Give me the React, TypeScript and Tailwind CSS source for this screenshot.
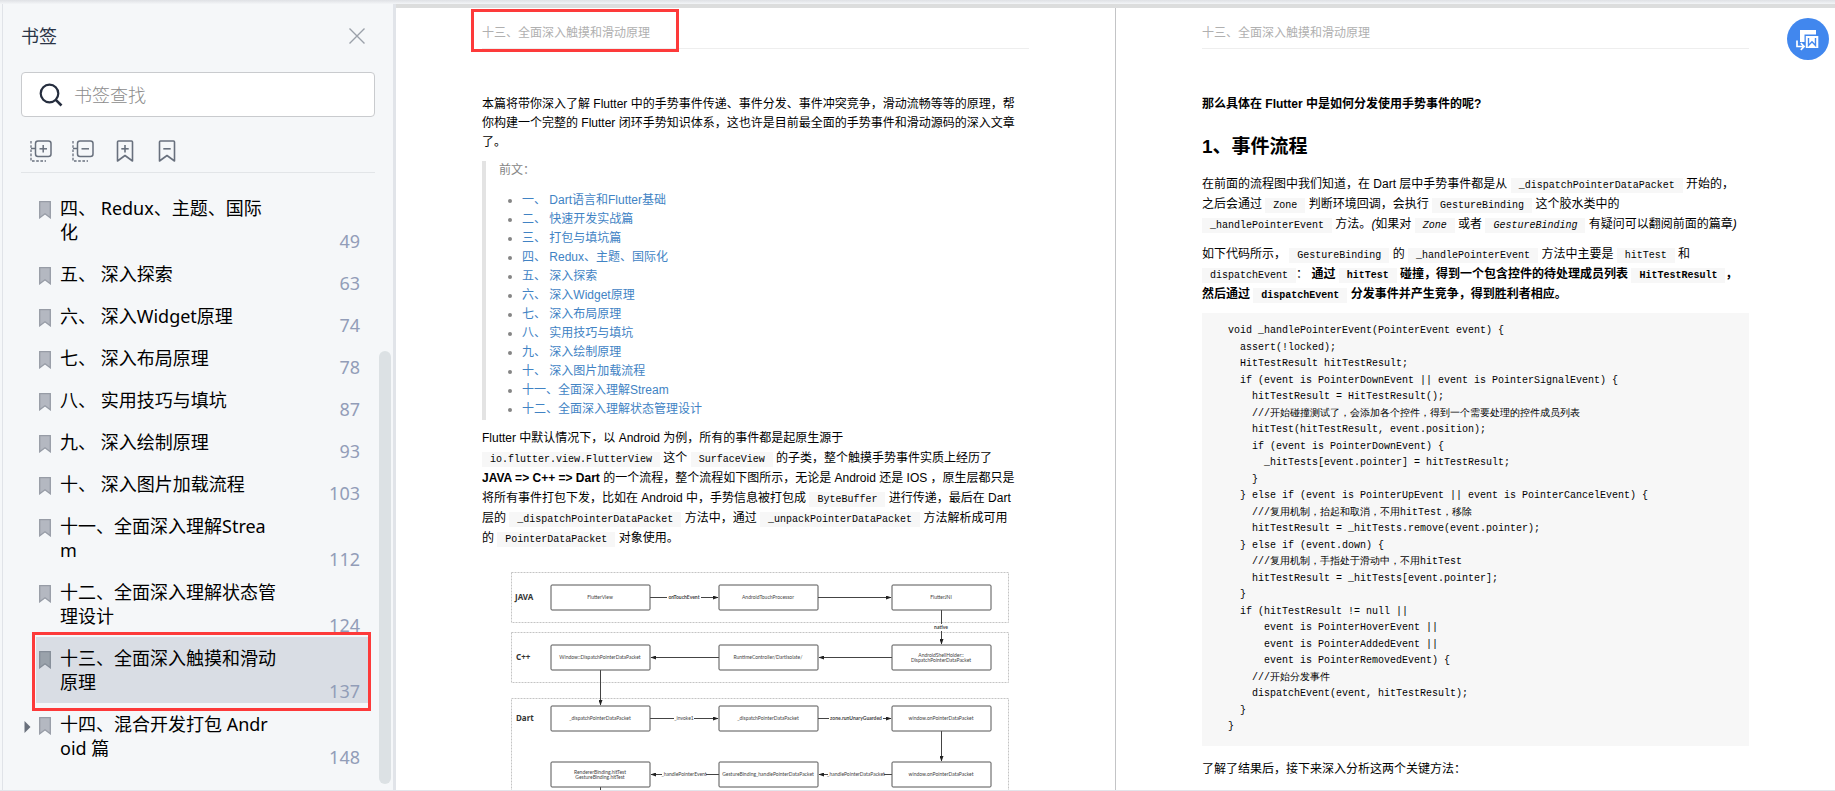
import type { ReactNode } from "react";

type Bookmark = { title: string; page: number; active?: boolean; expandable?: boolean };

const bookmarks: Bookmark[] = [
  { title: "四、 Redux、主题、国际化", page: 49 },
  { title: "五、 深入探索", page: 63 },
  { title: "六、 深入Widget原理", page: 74 },
  { title: "七、 深入布局原理", page: 78 },
  { title: "八、 实用技巧与填坑", page: 87 },
  { title: "九、 深入绘制原理", page: 93 },
  { title: "十、 深入图片加载流程", page: 103 },
  { title: "十一、全面深入理解Stream", page: 112 },
  { title: "十二、全面深入理解状态管理设计", page: 124 },
  { title: "十三、全面深入触摸和滑动原理", page: 137, active: true },
  { title: "十四、混合开发打包 Android 篇", page: 148, expandable: true },
];

const chapters = [
  "一、 Dart语言和Flutter基础",
  "二、 快速开发实战篇",
  "三、 打包与填坑篇",
  "四、 Redux、主题、国际化",
  "五、 深入探索",
  "六、 深入Widget原理",
  "七、 深入布局原理",
  "八、 实用技巧与填坑",
  "九、 深入绘制原理",
  "十、 深入图片加载流程",
  "十一、全面深入理解Stream",
  "十二、全面深入理解状态管理设计",
];

const source = `void _handlePointerEvent(PointerEvent event) {
  assert(!locked);
  HitTestResult hitTestResult;
  if (event is PointerDownEvent || event is PointerSignalEvent) {
    hitTestResult = HitTestResult();
    ///开始碰撞测试了，会添加各个控件，得到一个需要处理的控件成员列表
    hitTest(hitTestResult, event.position);
    if (event is PointerDownEvent) {
      _hitTests[event.pointer] = hitTestResult;
    }
  } else if (event is PointerUpEvent || event is PointerCancelEvent) {
    ///复用机制，抬起和取消，不用hitTest，移除
    hitTestResult = _hitTests.remove(event.pointer);
  } else if (event.down) {
    ///复用机制，手指处于滑动中，不用hitTest
    hitTestResult = _hitTests[event.pointer];
  }
  if (hitTestResult != null ||
      event is PointerHoverEvent ||
      event is PointerAddedEvent ||
      event is PointerRemovedEvent) {
    ///开始分发事件
    dispatchEvent(event, hitTestResult);
  }
}`;

function TreeIcon({ plus = false }: { plus?: boolean }) {
  return (
    <svg width="22" height="22" viewBox="0 0 22 22" fill="none" stroke="#68707d" strokeWidth="1.5">
      <path d="M1 1v20h15" strokeDasharray="2.6 1.6" strokeWidth="1.3" />
      <path d="M1 8.5h4" />
      <rect x="5.5" y="1" width="15.5" height="15.5" rx="2.5" />
      <path d="M9.5 8.8h7.5" />
      {plus && <path d="M13.2 5v7.5" />}
    </svg>
  );
}

function RibbonIcon({ plus = false }: { plus?: boolean }) {
  return (
    <svg width="18" height="22" viewBox="0 0 18 22" fill="none" stroke="#68707d" strokeWidth="1.6" strokeLinejoin="round">
      <path d="M1.5 2q0-1 1-1h13q1 0 1 1v19L9 15.5 1.5 21z" />
      <path d="M5.3 8.8h7.4" />
      {plus && <path d="M9 5v7.5" />}
    </svg>
  );
}

function BookmarkRow({ title, page, active, expandable }: Bookmark) {
  return (
    <li>
      <a href={`#page-${page}`} className={`relative flex items-start pr-2 pl-[3px] ${active ? "bg-[#d9dde4]" : ""}`}>
        {expandable && (
          <svg className="absolute top-[18px] -left-[12px]" width="7" height="12" viewBox="0 0 7 12">
            <path d="M0.5 0 6.5 6 0.5 12z" fill="#69707c" />
          </svg>
        )}
        <svg className="mt-[14px] shrink-0" width="12" height="18" viewBox="0 0 12 18">
          <path
            d="M0.7 0.7h10.6v16.1L6 12.8 0.7 16.8z"
            fill={active ? "#9aa2ab" : "#b4b8c1"}
            stroke={active ? "#858d98" : "#979ca6"}
            strokeWidth="1.3"
          />
        </svg>
        <span className="mt-[9px] mb-[9px] ml-[9px] w-[217px] shrink-0 font-[380] break-all text-black">{title}</span>
        <span className="ml-auto self-end font-[380] text-[#929db8]">{page}</span>
      </a>
    </li>
  );
}

function Sidebar() {
  return (
    <aside className="relative w-[391px] shrink-0 overflow-hidden border-l border-[#e0e3e8] bg-[#f5f7f9] px-[18px] font-['Noto_Sans','Noto_Sans_CJK_SC',sans-serif] text-lg leading-6">
      <div className="flex items-center justify-between pt-6 pr-[10px]">
        <h1 className="font-[380] text-[#2b3446]">书签</h1>
        <button aria-label="关闭">
          <svg width="16" height="16" viewBox="0 0 16 16" stroke="#9ba0a9" strokeWidth="1.4">
            <path d="M0.5 0.5l15 15M15.5 0.5l-15 15" />
          </svg>
        </button>
      </div>

      <label className="mt-6 flex h-[45px] items-center rounded-sm border border-[#c9cbce] bg-white pl-[17px]">
        <svg className="shrink-0" width="24" height="24" viewBox="0 0 24 24" fill="none" stroke="#252d3e" strokeWidth="2.2">
          <circle cx="10.5" cy="10.5" r="8.8" />
          <path d="M16.8 16.8l5.7 5.7" strokeWidth="2.6" />
        </svg>
        <input
          type="text"
          aria-label="书签查找"
          placeholder="书签查找"
          className="ml-[11px] min-w-0 flex-1 bg-transparent font-light outline-none placeholder:text-[#8c8c8c]"
        />
      </label>

      <div className="flex gap-5 border-b border-[#e2e5e8] pt-[23px] pb-[10px] pl-[9px]">
        <button aria-label="展开全部" className="flex w-[22px] justify-center"><TreeIcon plus /></button>
        <button aria-label="收起全部" className="flex w-[22px] justify-center"><TreeIcon /></button>
        <button aria-label="添加书签" className="flex w-[22px] justify-center"><RibbonIcon plus /></button>
        <button aria-label="删除书签" className="flex w-[22px] justify-center"><RibbonIcon /></button>
      </div>

      <div className="relative mt-[14px] mr-[7px] ml-[15px]">
        <ul>
          {bookmarks.map((b) => (
            <BookmarkRow key={b.page} {...b} />
          ))}
        </ul>
        {/* callout around the selected chapter */}
        <div className="pointer-events-none absolute -right-[3px] bottom-[58px] -left-1 h-[79px] border-3 border-[#fd3a3a]" />
      </div>

      <div className="absolute right-[2px] bottom-[6px] h-[433px] w-3 rounded-full bg-[#dce1e4]" />
    </aside>
  );
}

function Page({ children, marked = false }: { children: ReactNode; marked?: boolean }) {
  return (
    <article className="relative min-w-0 flex-1 overflow-hidden bg-white px-[86px] text-xs leading-[19px] text-black">
      <header className="border-b border-[#eeeeee] pt-4 pb-[6px] leading-[18px] text-[#b0b0b0]">十三、全面深入触摸和滑动原理</header>
      {marked && <div className="absolute top-px left-[75px] h-[43px] w-[208px] border-3 border-[#fd3a3a]" />}
      {children}
    </article>
  );
}

function Code({ children }: { children: ReactNode }) {
  return (
    <code className="bg-[#f7f7f7] px-2 py-[2px] font-['Liberation_Mono','Noto_Sans_CJK_SC',monospace] text-[10px] leading-none">{children}</code>
  );
}

const boxes = [
  { x: 69, y: 24, lines: ["FlutterView"] },
  { x: 237, y: 24, lines: ["AndroidTouchProcessor"] },
  { x: 410, y: 24, lines: ["FlutterJNI"] },
  { x: 69, y: 84, lines: ["Window::DispatchPointerDataPacket"] },
  { x: 237, y: 84, lines: ["RuntimeController/DartIsolate/"] },
  { x: 410, y: 84, lines: ["AndroidShellHolder::", "DispatchPointerDataPacket"] },
  { x: 69, y: 145, lines: ["_dispatchPointerDataPacket"] },
  { x: 237, y: 145, lines: ["_dispatchPointerDataPacket"] },
  { x: 410, y: 145, lines: ["window.onPointerDataPacket"] },
  { x: 69, y: 201, lines: ["RendererBinding.hitTest", "GestureBinding.hitTest"] },
  { x: 237, y: 201, lines: ["GestureBinding_handlePointerDataPacket"] },
  { x: 410, y: 201, lines: ["window.onPointerDataPacket"] },
];

const arrows = [
  "M168 36.5H236",
  "M336 36.5H409",
  "M459.5 49V83",
  "M410 96.5H337",
  "M237 96.5H169",
  "M118.5 109V144",
  "M168 157.5H236",
  "M336 157.5H409",
  "M459.5 170V200",
  "M410 213.5H337",
  "M237 213.5H169",
];

const edgeLabels = [
  { x: 202, y: 36, w: 34, text: "onTouchEvent", bold: true },
  { x: 459, y: 66, w: 16, text: "native", bold: true },
  { x: 202, y: 157, w: 20, text: "_invoke1" },
  { x: 374, y: 157, w: 54, text: "zone.runUnaryGuarded", bold: true },
  { x: 202, y: 213, w: 44, text: "_handlePointerEvent" },
  { x: 374, y: 213, w: 56, text: "_handlePointerDataPacket" },
];

function FlowChart() {
  return (
    <svg className="mt-[13px] w-full font-['Lato','Noto_Sans',sans-serif]" viewBox="0 0 547 240" fill="#444444">
      <defs>
        <marker id="head" markerUnits="userSpaceOnUse" markerWidth="6" markerHeight="4" refX="5" refY="2" orient="auto">
          <path d="M0 0 5.5 2 0 4z" fill="#222222" />
        </marker>
      </defs>
      <g fill="none" stroke="#c4c4c4" strokeDasharray="2 1">
        <rect x="29.5" y="11.5" width="497" height="50" />
        <rect x="29.5" y="71.5" width="497" height="50" />
        <rect x="29.5" y="137.5" width="497" height="160" />
      </g>
      <g className="font-['Noto_Sans',sans-serif]" fontSize="8" fontWeight="700" fill="#333333">
        <text x="33" y="39">JAVA</text>
        <text x="34" y="99">C++</text>
        <text x="34" y="160">Dart</text>
      </g>
      <g stroke="#444444">
        {arrows.map((d) => (
          <path key={d} d={d} markerEnd="url(#head)" />
        ))}
        <path d="M118.5 226V240" />
      </g>
      {edgeLabels.map((l) => (
        <g key={l.text} fontSize="5" textAnchor="middle" fontWeight={l.bold ? 700 : 400}>
          <rect x={l.x - l.w / 2} y={l.y - 3} width={l.w} height="7" fill="#ffffff" />
          <text x={l.x} y={l.y + 2}>{l.text}</text>
        </g>
      ))}
      {boxes.map((b) => (
        <g key={`${b.x}-${b.y}`} fontSize="5" textAnchor="middle">
          <rect x={b.x} y={b.y} width="99" height="25" rx="1" fill="#ffffff" stroke="#555555" />
          {b.lines.map((line, i) => (
            <text key={line} x={b.x + 49} y={b.y + 14 + (b.lines.length > 1 ? i * 5 - 2 : 0)}>{line}</text>
          ))}
        </g>
      ))}
    </svg>
  );
}

export default function App() {
  return (
    <div className="relative flex h-screen overflow-hidden border-b border-[#e2e4ea] bg-[#f5f7f9] pl-[2px] font-['Liberation_Sans','Noto_Sans_CJK_SC',sans-serif]">
      <Sidebar />
      <div className="w-[3px] shrink-0 bg-[#e1e4e9]" />

      <main className="flex min-w-0 flex-1 border-t-8 border-[#dcdddd]">
        <Page marked>
          <p className="mt-[46px]">
            本篇将带你深入了解 Flutter 中的手势事件传递、事件分发、事件冲突竞争，滑动流畅等等的原理，帮
            <br />
            你构建一个完整的 Flutter 闭环手势知识体系，这也许是目前最全面的手势事件和滑动源码的深入文章
            <br />
            了。
          </p>

          <blockquote className="mt-[9px] border-l-4 border-[#e3e3e3] pb-px text-[#858585]">
            <p className="pl-[13px]">前文：</p>
            <ul className="mt-[11px] list-disc pl-9">
              {chapters.map((c) => (
                <li key={c}>
                  <a href="#chapter" className="text-[#4183c4]">{c}</a>
                </li>
              ))}
            </ul>
          </blockquote>

          <p className="mt-2 leading-5">
            Flutter 中默认情况下，以 Android 为例，所有的事件都是起原生源于
            <br />
            <Code>io.flutter.view.FlutterView</Code> 这个 <Code>SurfaceView</Code> 的子类，整个触摸手势事件实质上经历了
            <br />
            <strong>{"JAVA => C++ => Dart"}</strong> 的一个流程，整个流程如下图所示，无论是 Android 还是 IOS ，原生层都只是
            <br />
            将所有事件打包下发，比如在 Android 中，手势信息被打包成 <Code>ByteBuffer</Code> 进行传递，最后在 Dart
            <br />
            层的 <Code>_dispatchPointerDataPacket</Code> 方法中，通过 <Code>_unpackPointerDataPacket</Code> 方法解析成可用
            <br />
            的 <Code>PointerDataPacket</Code> 对象使用。
          </p>

          <FlowChart />
        </Page>

        <div className="w-px shrink-0 bg-[#c3c4c6]" />

        <Page>
          <p className="mt-[46px] font-bold">那么具体在 Flutter 中是如何分发使用手势事件的呢?</p>
          <h2 className="mt-[21px] text-[19px] leading-6 font-bold">1、事件流程</h2>

          <p className="mt-[15px] leading-5">
            在前面的流程图中我们知道，在 Dart 层中手势事件都是从 <Code>_dispatchPointerDataPacket</Code> 开始的，
            <br />
            之后会通过 <Code>Zone</Code> 判断环境回调，会执行 <Code>GestureBinding</Code> 这个胶水类中的
            <br />
            <Code>_handlePointerEvent</Code> 方法。
            <em className="[font-synthesis:none]">
              (如果对 <Code>Zone</Code> 或者 <Code>GestureBinding</Code> 有疑问可以翻阅前面的篇章)
            </em>
          </p>

          <p className="mt-[10px] leading-5">
            如下代码所示， <Code>GestureBinding</Code> 的 <Code>_handlePointerEvent</Code> 方法中主要是 <Code>hitTest</Code> 和
            <br />
            <Code>dispatchEvent</Code>：{" "}
            <strong>
              通过 <Code>hitTest</Code> 碰撞，得到一个包含控件的待处理成员列表 <Code>HitTestResult</Code>，
              <br />
              然后通过 <Code>dispatchEvent</Code> 分发事件并产生竞争，得到胜利者相应。
            </strong>
          </p>

          <pre className="mt-[9px] bg-[#f7f7f7] py-[10px] pl-[26px] font-['Liberation_Mono','Noto_Sans_CJK_SC',monospace] text-[10px] leading-4">
            {source.split("\n").map((line, i) => (
              <code key={i} className="block odd:pb-px">{line}</code>
            ))}
          </pre>

          <p className="mt-[14px]">了解了结果后，接下来深入分析这两个关键方法：</p>
        </Page>
      </main>

      <div className="absolute inset-x-0 top-0 h-1 bg-linear-to-b from-[#dfe1e5] to-[#f3f5f7]" />

      <button aria-label="转换为 Word" className="absolute top-[18px] right-[6px] size-[42px] rounded-full bg-[#4187ee]">
        <svg width="42" height="42" viewBox="0 0 42 42" fill="none">
          <path d="M13 12h16v12H13z" fill="#ffffff" />
          <path d="M17.5 16.5h15v15h-15z" fill="#4187ee" />
          <path d="M18.8 18h12.5v12H18.8z" fill="#ffffff" />
          <path d="M21.5 20v7.5l3.5-3.8 3.5 3.8V20" stroke="#4187ee" strokeWidth="1.4" />
          <path d="M10 22.5v6h6.5M13.8 25.2l3.3 3.3-3.3 3.3" stroke="#ffffff" strokeWidth="1.7" />
        </svg>
      </button>
    </div>
  );
}
